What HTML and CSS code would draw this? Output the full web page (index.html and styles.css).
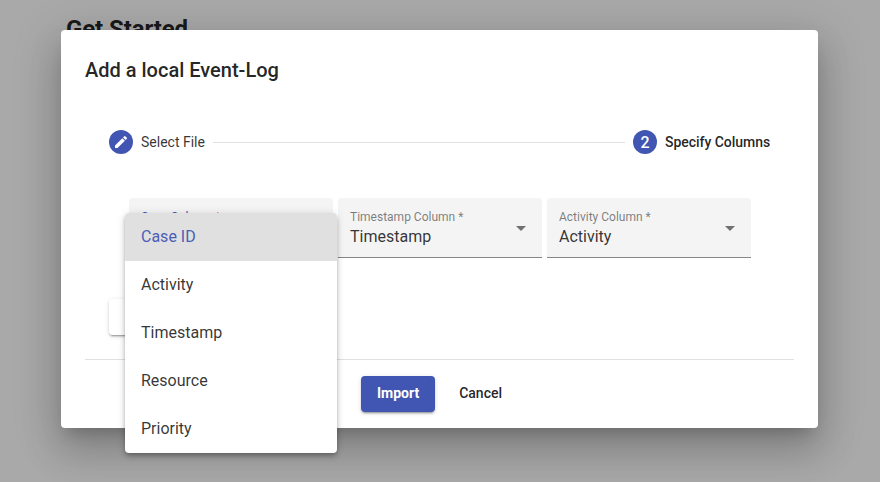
FILE: index.html
```html
<!DOCTYPE html>
<html lang="en">
<head>
<meta charset="utf-8">
<title>Add a local Event-Log</title>
<link rel="stylesheet" href="styles.css">
</head>
<body>
<h1 class="page-title">Get Started</h1>
<div class="backdrop">
  <section class="dialog" role="dialog">
    <h2 class="dialog-title">Add a local Event-Log</h2>
    <div class="stepper">
      <div class="step">
        <span class="step-icon"><svg width="16" height="16" viewBox="0 0 24 24" fill="#fff"><path d="M3 17.25V21h3.75L17.81 9.94l-3.75-3.75L3 17.25zM20.71 7.04a1 1 0 0 0 0-1.41l-2.34-2.34a1 1 0 0 0-1.41 0l-1.83 1.83 3.75 3.75 1.83-1.83z"/></svg></span>
        <span class="step-label">Select File</span>
      </div>
      <div class="step-line"></div>
      <div class="step">
        <span class="step-icon">2</span>
        <span class="step-label active">Specify Columns</span>
      </div>
    </div>
    <div class="fields">
      <div class="field open">
        <div class="field-label">Case Column <span class="required">*</span></div>
        <div class="field-value">Case ID</div>
        <ul class="menu">
          <li class="option selected">Case ID</li>
          <li class="option">Activity</li>
          <li class="option">Timestamp</li>
          <li class="option">Resource</li>
          <li class="option">Priority</li>
        </ul>
      </div>
      <div class="field">
        <div class="field-label">Timestamp Column *</div>
        <div class="field-value">Timestamp</div>
        <span class="arrow"></span>
      </div>
      <div class="field">
        <div class="field-label">Activity Column *</div>
        <div class="field-value">Activity</div>
        <span class="arrow"></span>
      </div>
    </div>
    <button class="button raised back">Back</button>
    <div class="actions">
      <button class="button raised primary">Import</button>
      <button class="button">Cancel</button>
    </div>
  </section>
</div>
</body>
</html>
```
FILE: styles.css
```css
* { box-sizing: border-box; }

body {
  margin: 0;
  height: 482px;
  overflow: hidden;
  background: #fafafa;
  color: rgba(0, 0, 0, 0.87);
  font-family: Roboto, "Liberation Sans", sans-serif;
}

.page-title {
  margin: 0;
  padding: 13px 0 0 66px;
  font-size: 24px;
  line-height: 32px;
  font-weight: 700;
  letter-spacing: -0.1px;
}

.backdrop {
  position: absolute;
  inset: 0;
  padding: 30px 62px 0 61px;
  background: rgba(0, 0, 0, 0.32);
}

.dialog {
  height: 398px;
  padding: 24px;
  border-radius: 4px;
  background: #fff;
  box-shadow: 0 11px 15px -7px rgba(0, 0, 0, 0.2),
    0 24px 38px 3px rgba(0, 0, 0, 0.14),
    0 9px 46px 8px rgba(0, 0, 0, 0.12);
}

.dialog-title {
  margin: 0 0 20px;
  font-size: 20px;
  line-height: 32px;
  font-weight: 500;
}

.stepper {
  display: flex;
  align-items: center;
  height: 72px;
  padding: 0 24px;
}

.step {
  display: flex;
  align-items: center;
  gap: 8px;
  font-size: 14px;
}

.step-icon {
  display: flex;
  align-items: center;
  justify-content: center;
  width: 24px;
  height: 24px;
  border-radius: 50%;
  background: #4155b2;
  color: #fff;
  font-size: 16px;
  font-weight: 500;
}

.step-label { color: rgba(0, 0, 0, 0.8); }

.step-label.active {
  width: 105px;
  white-space: nowrap;
  color: rgba(0, 0, 0, 0.87);
  font-weight: 500;
  letter-spacing: -0.03px;
}

.step-line {
  flex: 1;
  margin: 0 8px;
  border-top: 1px solid rgba(0, 0, 0, 0.12);
}

.fields {
  display: flex;
  gap: 5px;
  margin: 20px 0 41px 44px;
}

.field {
  position: relative;
  width: 204px;
  height: 60px;
  padding: 11px 12px 0;
  border-bottom: 1px solid rgba(0, 0, 0, 0.45);
  border-radius: 4px 4px 0 0;
  background: #f4f4f4;
}

.field-label {
  font-size: 12px;
  line-height: 16px;
  color: rgba(0, 0, 0, 0.5);
}

.open .field-label { color: #4155b2; }
.open .required { color: #ff4081; }

.field-value {
  font-size: 16px;
  line-height: 23px;
  color: rgba(0, 0, 0, 0.8);
}

.arrow {
  position: absolute;
  right: 16px;
  top: 28px;
  border: 5px solid transparent;
  border-top-color: rgba(0, 0, 0, 0.54);
  border-bottom: 0;
}

.menu {
  position: absolute;
  z-index: 1;
  left: -4px;
  top: 15px;
  width: 212px;
  margin: 0;
  padding: 0;
  overflow: hidden;
  list-style: none;
  border-radius: 4px;
  background: #fff;
  box-shadow: 0 2px 4px -1px rgba(0, 0, 0, 0.2),
    0 4px 5px rgba(0, 0, 0, 0.14),
    0 1px 10px rgba(0, 0, 0, 0.12);
}

.option {
  padding: 0 16px;
  font-size: 16px;
  line-height: 48px;
  color: rgba(0, 0, 0, 0.8);
}

.option.selected {
  background: #e0e0e0;
  color: #4b5db5;
}

.button {
  height: 36px;
  padding: 0 16px 2px;
  border: 0;
  border-radius: 4px;
  background: #fff;
  color: rgba(0, 0, 0, 0.87);
  font: 500 14px/34px Roboto, "Liberation Sans", sans-serif;
}

.raised {
  box-shadow: 0 3px 1px -2px rgba(0, 0, 0, 0.2),
    0 2px 2px rgba(0, 0, 0, 0.14),
    0 1px 5px rgba(0, 0, 0, 0.12);
}

.primary {
  background: #4155b2;
  color: #fff;
  font-weight: 700;
}

.back {
  display: block;
  margin: 0 0 24px 24px;
}

.actions {
  display: flex;
  justify-content: center;
  gap: 8px;
  padding-top: 16px;
  border-top: 1px solid rgba(0, 0, 0, 0.12);
}
```
